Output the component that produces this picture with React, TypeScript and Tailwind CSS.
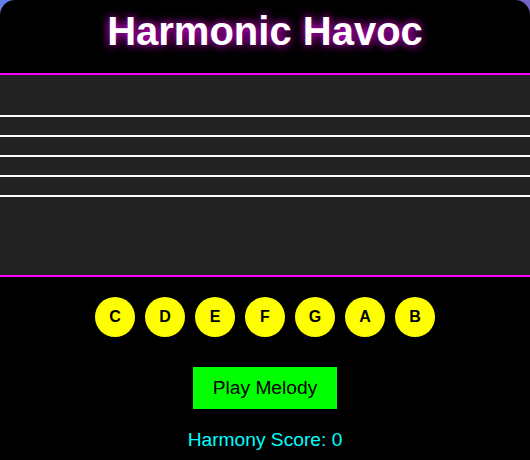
const NOTES = ["C", "D", "E", "F", "G", "A", "B"];

export default function App() {
  return (
    <div className="min-h-[460px] bg-gradient-to-br from-[#667eea] to-[#764ba2] font-['Liberation_Sans',Arial,sans-serif]">
      <div className="flex min-h-[480px] flex-col items-center rounded-[15px] bg-black pt-[8px]">
        <h1 className="text-[40px] leading-[46px] font-bold text-white [text-shadow:0_0_10px_#ff00ff]">
          Harmonic Havoc
        </h1>

        {/* staff — five lines on a dark band */}
        <div className="mt-[19px] flex h-[204px] w-full flex-col gap-[18px] border-y-2 border-[#ff00ff] bg-[#222] pt-[40px]">
          {[0, 1, 2, 3, 4].map((i) => (
            <div key={i} className="h-[2px] w-full bg-white" />
          ))}
        </div>

        <div className="mt-[20px] flex gap-[10px]">
          {NOTES.map((n) => (
            <button
              key={n}
              className="flex size-[40px] items-center justify-center rounded-full bg-[#ffff00] text-[16px] font-bold text-black"
            >
              {n}
            </button>
          ))}
        </div>

        <button className="mt-[30px] h-[42px] w-[144px] bg-[#00ff00] text-[19.2px] text-black">
          Play Melody
        </button>

        <div className="mt-[20px] text-[19.2px] leading-[22px] text-[#00ffff]">
          Harmony Score: 0
        </div>
      </div>
    </div>
  );
}
